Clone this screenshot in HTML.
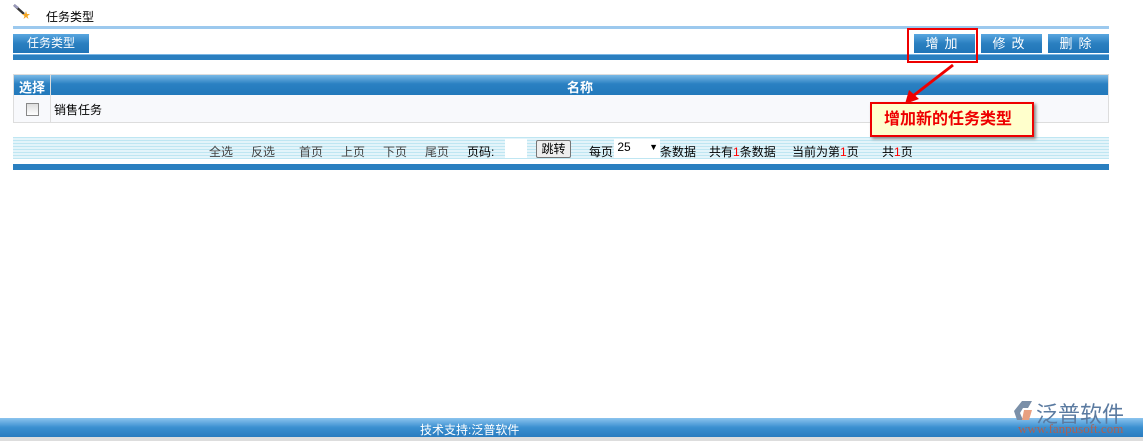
<!DOCTYPE html>
<html><head><meta charset="utf-8"><style>
body{margin:0;width:1143px;height:444px;background:#fff;position:relative;overflow:hidden;font-family:"Liberation Sans","Noto Sans CJK SC",sans-serif;font-size:12px;color:#000}
.a{position:absolute}
.btn{position:absolute;top:34px;height:19px;width:61px;background:linear-gradient(#5aa7e0,#2a7fc0 50%,#2075b8);color:#fff;text-align:center;line-height:19px;letter-spacing:6px;font-size:13px}
.p{position:absolute;top:143px;font-size:12px;color:#444}
.q{position:absolute;top:143px;font-size:12px;color:#000}
</style></head><body>
<svg class="a" style="left:12px;top:3px" width="20" height="16"><line x1="2" y1="2" x2="12" y2="11" stroke="#333" stroke-width="2.5"/><line x1="2" y1="2" x2="6" y2="5" stroke="#99b" stroke-width="2.5"/><polygon points="14,8 15,11 18,11 15.5,13 16.5,16 14,14 11.5,16 12.5,13 10,11 13,11" fill="#f5a623"/></svg>
<div class="a" style="left:46px;top:8px;font-size:12px">任务类型</div>
<div class="a" style="left:13px;top:26px;width:1096px;height:3px;background:#9cc9ee"></div>
<div class="a" style="left:13px;top:34px;width:76px;height:19px;background:linear-gradient(#5aa7e0,#2a7fc0 50%,#2075b8);color:#fff;line-height:19px;text-align:center;font-size:12px">任务类型</div>
<div class="btn" style="left:914px">增加</div>
<div class="btn" style="left:981px">修改</div>
<div class="btn" style="left:1048px">删除</div>
<div class="a" style="left:13px;top:54px;width:1096px;height:6px;background:#2a7fc0;border-top:1px solid #7bb6e4;box-sizing:border-box"></div>
<div class="a" style="left:907px;top:28px;width:67px;height:31px;border:2px solid #e00"></div>
<div class="a" style="left:13px;top:74px;width:1094px;height:47px;border:1px solid #ddd;background:#f8f9fc"></div>
<div class="a" style="left:14px;top:75px;width:1094px;height:20px;background:linear-gradient(#7ab9e6,#2a80c2 45%,#2279bb)"></div>
<div class="a" style="left:50px;top:75px;width:1px;height:47px;background:#ddd"></div>
<div class="a" style="left:19px;top:77px;color:#fff;font-weight:bold;font-size:13px">选择</div>
<div class="a" style="left:567px;top:77px;color:#fff;font-weight:bold;font-size:13px">名称</div>
<div class="a" style="left:26px;top:103px;width:11px;height:11px;border:1px solid #888;background:linear-gradient(#ddd,#fff)"></div>
<div class="a" style="left:54px;top:101px;font-size:12px">销售任务</div>
<div class="a" style="left:13px;top:137px;width:1096px;height:22px;background:repeating-linear-gradient(#bfe6f2 0 1px,#e3f4fa 1px 3px)"></div>
<div class="a" style="left:13px;top:164px;width:1096px;height:6px;background:#2a7fc0"></div>
<div class="p" style="left:209px">全选</div>
<div class="p" style="left:251px">反选</div>
<div class="p" style="left:299px">首页</div>
<div class="p" style="left:341px">上页</div>
<div class="p" style="left:383px">下页</div>
<div class="p" style="left:425px">尾页</div>
<div class="q" style="left:467px">页码:</div>
<div class="a" style="top:139px;left:505px;width:22px;height:19px;background:#fff"></div>
<div class="a" style="top:140px;left:536px;width:33px;height:16px;border:1px solid #777;border-radius:2px;background:#eee;font-size:12px;text-align:center;line-height:16px">跳转</div>
<div class="q" style="left:589px">每页</div>
<div class="a" style="top:139px;left:614px;width:46px;height:19px;background:#fff;font-size:12px;line-height:17px">&nbsp;25<span style="position:absolute;right:2px;font-size:9px">▼</span></div>
<div class="q" style="left:660px">条数据</div>
<div class="q" style="left:709px">共有<span style="color:red">1</span>条数据</div>
<div class="q" style="left:792px">当前为第<span style="color:red">1</span>页</div>
<div class="q" style="left:882px">共<span style="color:red">1</span>页</div>
<svg class="a" style="left:895px;top:60px" width="70" height="50"><line x1="58" y1="5" x2="18" y2="36" stroke="#e00" stroke-width="3"/><polygon points="10,44 14,30 24,39" fill="#e00"/></svg>
<div class="a" style="left:870px;top:102px;height:31px;background:#ffffcc;border:2px solid #e00;box-shadow:2px 2px 3px #888;color:#e00;font-weight:bold;font-size:16px;line-height:31px;padding-left:12px;width:148px">增加新的任务类型</div>
<div class="a" style="left:0;top:418px;width:1143px;height:19px;background:linear-gradient(#8cc4ee,#3a8fd0 50%,#2a7cbf)"></div>
<div class="a" style="left:0;top:437px;width:1143px;height:4px;background:#ddd"></div>
<div class="a" style="left:420px;top:421px;color:#fff;font-size:12px">技术支持:泛普软件</div>
<svg class="a" style="left:1014px;top:400px" width="20" height="22"><polygon points="8,1 18,1 14,8 9,8 6,13 9,20 3,20 0,11" fill="#7a8fa8"/><polygon points="10,10 18,10 15,20 8,20" fill="#e8a080"/></svg>
<div class="a" style="left:1036px;top:397px;font-size:22px;color:#5a7aa0">泛普软件</div>
<div class="a" style="left:1018px;top:421px;font-size:13px;color:#b06050;font-family:'Liberation Serif',serif">www.fanpusoft.com</div>
</body></html>
